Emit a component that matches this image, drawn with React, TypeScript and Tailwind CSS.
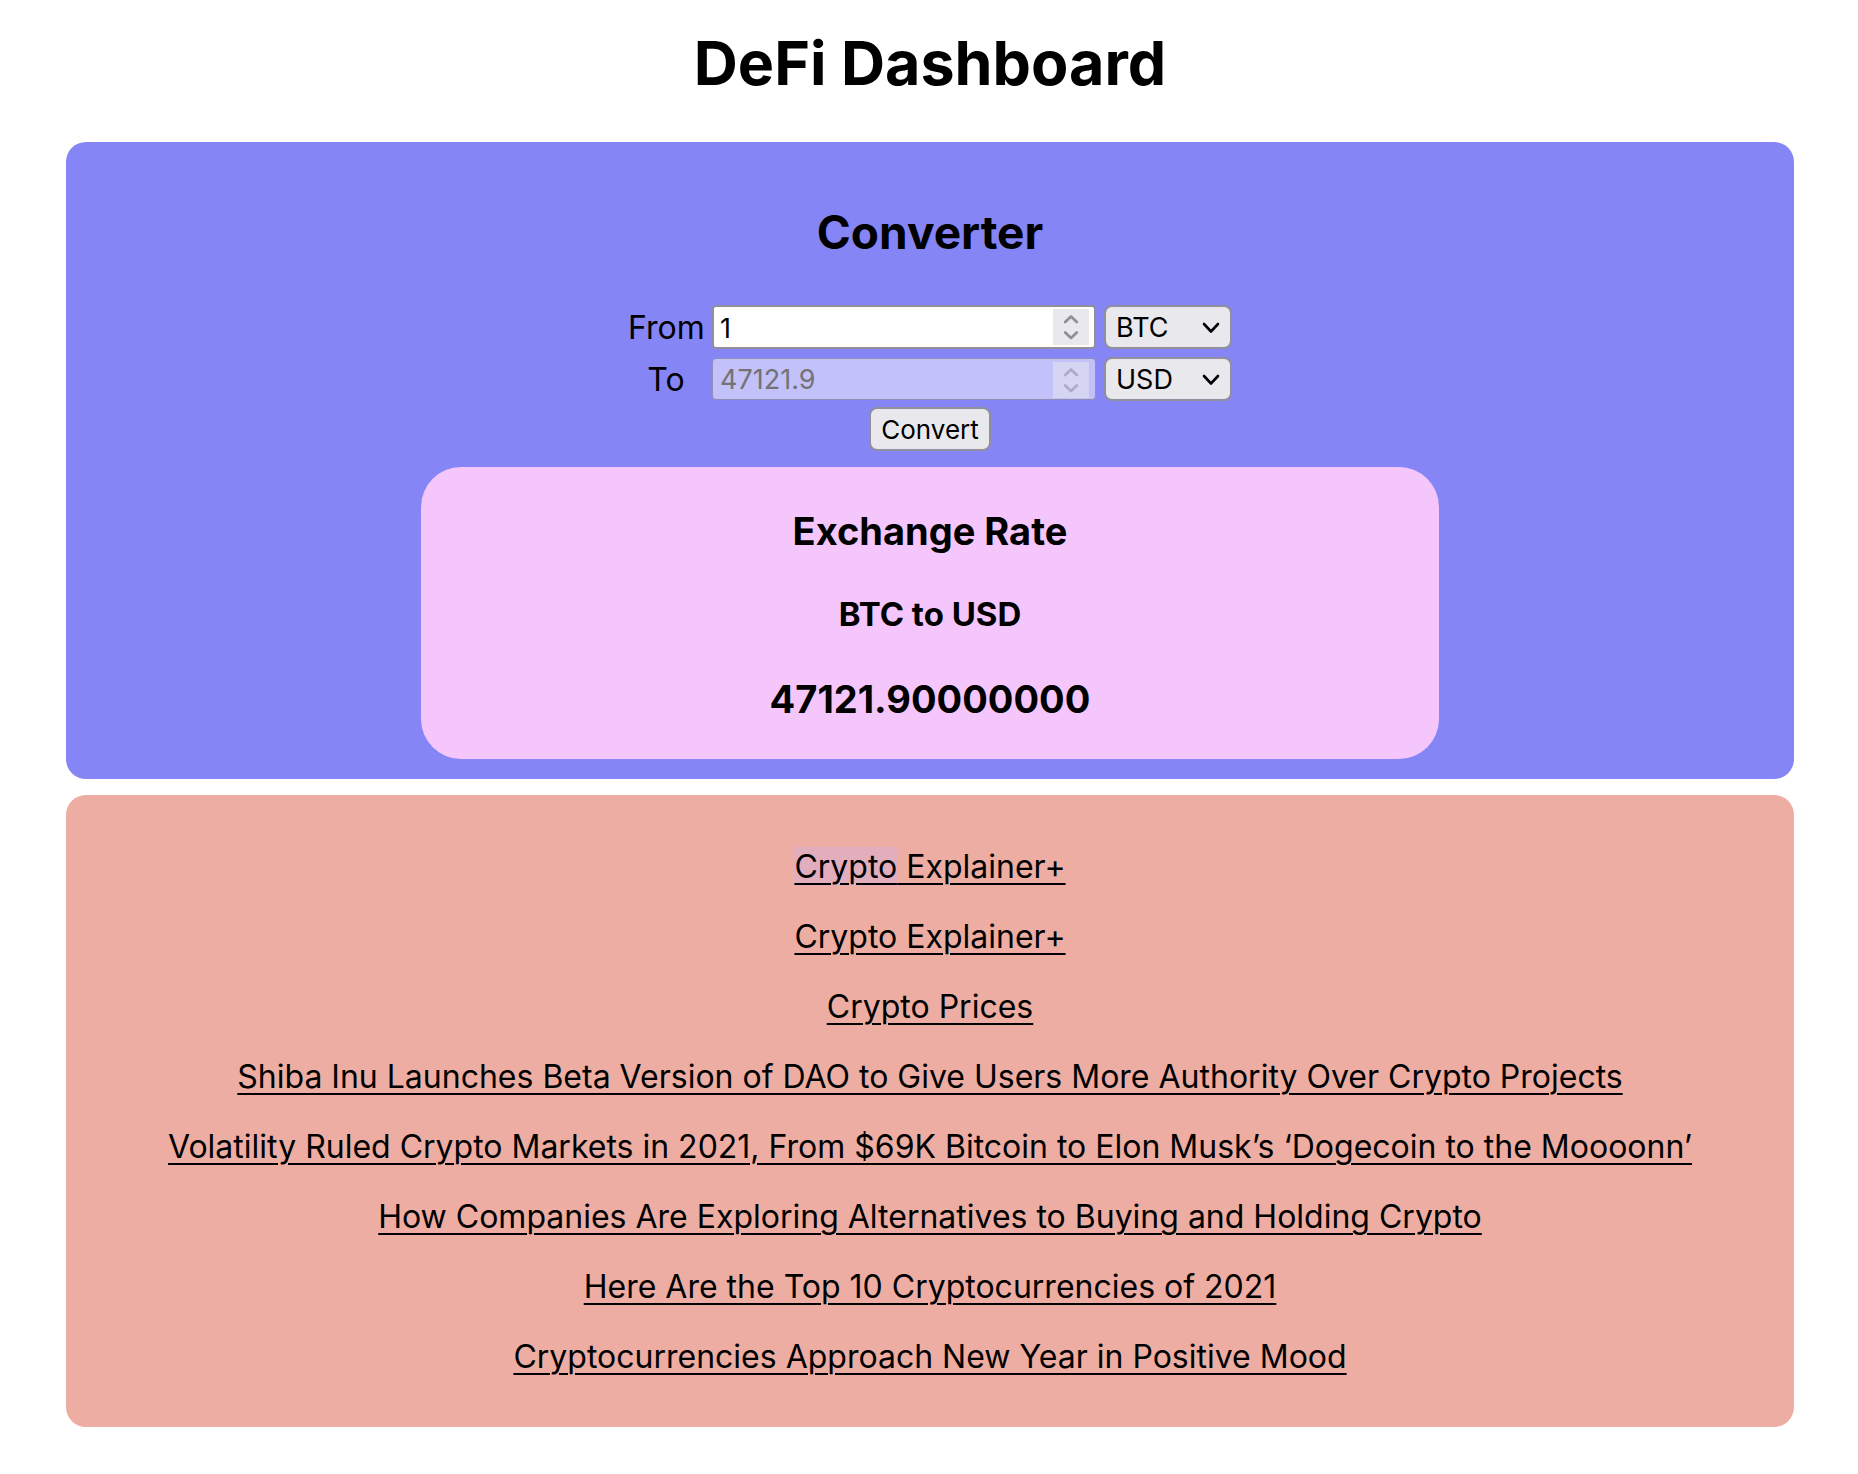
const links = [
  'Crypto Explainer+',
  'Crypto Prices',
  'Shiba Inu Launches Beta Version of DAO to Give Users More Authority Over Crypto Projects',
  'Volatility Ruled Crypto Markets in 2021, From $69K Bitcoin to Elon Musk’s ‘Dogecoin to the Moooonn’',
  'How Companies Are Exploring Alternatives to Buying and Holding Crypto',
  'Here Are the Top 10 Cryptocurrencies of 2021',
  'Cryptocurrencies Approach New Year in Positive Mood',
];

function Arrows({ disabled = false }: { disabled?: boolean }) {
  return (
    <span className={disabled ? 'absolute right-[7px] top-1 flex h-9 w-9 items-center justify-center bg-[#e9e9ed] opacity-50' : 'absolute right-[7px] top-1 flex h-9 w-9 items-center justify-center bg-[#e9e9ed]'}>
      <svg width="18" height="28" viewBox="0 0 18 28" fill="none" stroke={disabled ? '#9595a2' : '#8f8f9d'} strokeWidth="2.8" strokeLinecap="round" strokeLinejoin="round">
        <path d="M3.2 9l5.8-5.6L14.8 9M3.2 19.5l5.8 5.6 5.8-5.6" />
      </svg>
    </span>
  );
}

function Currency({ label, value }: { label: string; value: string }) {
  return (
    <div className="relative">
      <select aria-label={label} defaultValue={value} className="block h-11 w-full appearance-none rounded-lg border-2 border-[#8f8f9d] bg-[#e9e9ed] px-2.5 pt-0.5 text-[27px] leading-8">
        <option>BTC</option>
        <option>USD</option>
      </select>
      <svg className="pointer-events-none absolute right-3 top-3.5" width="18" height="18" viewBox="0 0 18 18" fill="none" stroke="black" strokeWidth="2.6" strokeLinecap="round" strokeLinejoin="round">
        <path d="M2 5l7 7.5 7-7.5" />
      </svg>
    </div>
  );
}

export default function App() {
  return (
    <main className="pb-12 pl-[66px] pr-16 pt-7 text-center font-['Inter',sans-serif] text-black">
      <h1 className="text-[61px] font-bold leading-[70px]">DeFi Dashboard</h1>
      <section className="mt-11 rounded-[20px] bg-[#8685f5] px-4 pb-5 pt-[61px]">
        <h2 className="text-[46px] font-bold leading-[58px]">Converter</h2>
        <div className="mx-auto mt-11 grid w-fit grid-cols-[76px_384px_128px] items-center gap-2 text-[32px] leading-[42px]">
          <label htmlFor="from" className="pt-0.5">From</label>
          <div className="relative">
            <input id="from" type="number" defaultValue="1" className="block h-11 w-full appearance-none rounded-[4px] border-2 border-[#8f8f9d] bg-white px-1.5 pt-0.5 text-[27px] [appearance:textfield]" />
            <Arrows />
          </div>
          <Currency label="From currency" value="BTC" />
          <label htmlFor="to" className="pt-0.5">To</label>
          <div className="relative">
            <input id="to" type="number" disabled defaultValue="47121.9" className="block h-[42px] w-full appearance-none rounded-[4px] border border-[#8f8fb8] bg-[#c2c1fa] px-[7px] pt-0.5 text-[27px] text-[#737373] [appearance:textfield]" />
            <Arrows disabled />
          </div>
          <Currency label="To currency" value="USD" />
        </div>
        <button className="mx-auto mt-1.5 block h-11 rounded-lg border-2 border-[#8f8f9d] bg-[#e9e9ed] px-2.5 text-[26px]">Convert</button>
        <div className="mx-auto mt-4 w-3/5 rounded-[40px] bg-[#f5c6fb] pb-9 pt-10">
          <h3 className="text-[38px] font-bold leading-[48px]">Exchange Rate</h3>
          <h4 className="mt-[35px] text-[33px] font-bold leading-[48px]">BTC to USD</h4>
          <p className="mt-[37px] text-[38px] font-bold leading-[48px]">47121.90000000</p>
        </div>
      </section>
      <section className="mt-4 rounded-[20px] bg-[#eeada2] px-4 pb-[50px] pt-[52px] text-[32px] leading-10">
        <ul className="flex flex-col gap-[30px]">
          <li><a href="#" className="underline decoration-2 underline-offset-[5px]"><span className="bg-[#e2adbd]">Crypto</span> Explainer+</a></li>
          {links.map((title) => (
            <li key={title}><a href="#" className="underline decoration-2 underline-offset-[5px]">{title}</a></li>
          ))}
        </ul>
      </section>
    </main>
  );
}
